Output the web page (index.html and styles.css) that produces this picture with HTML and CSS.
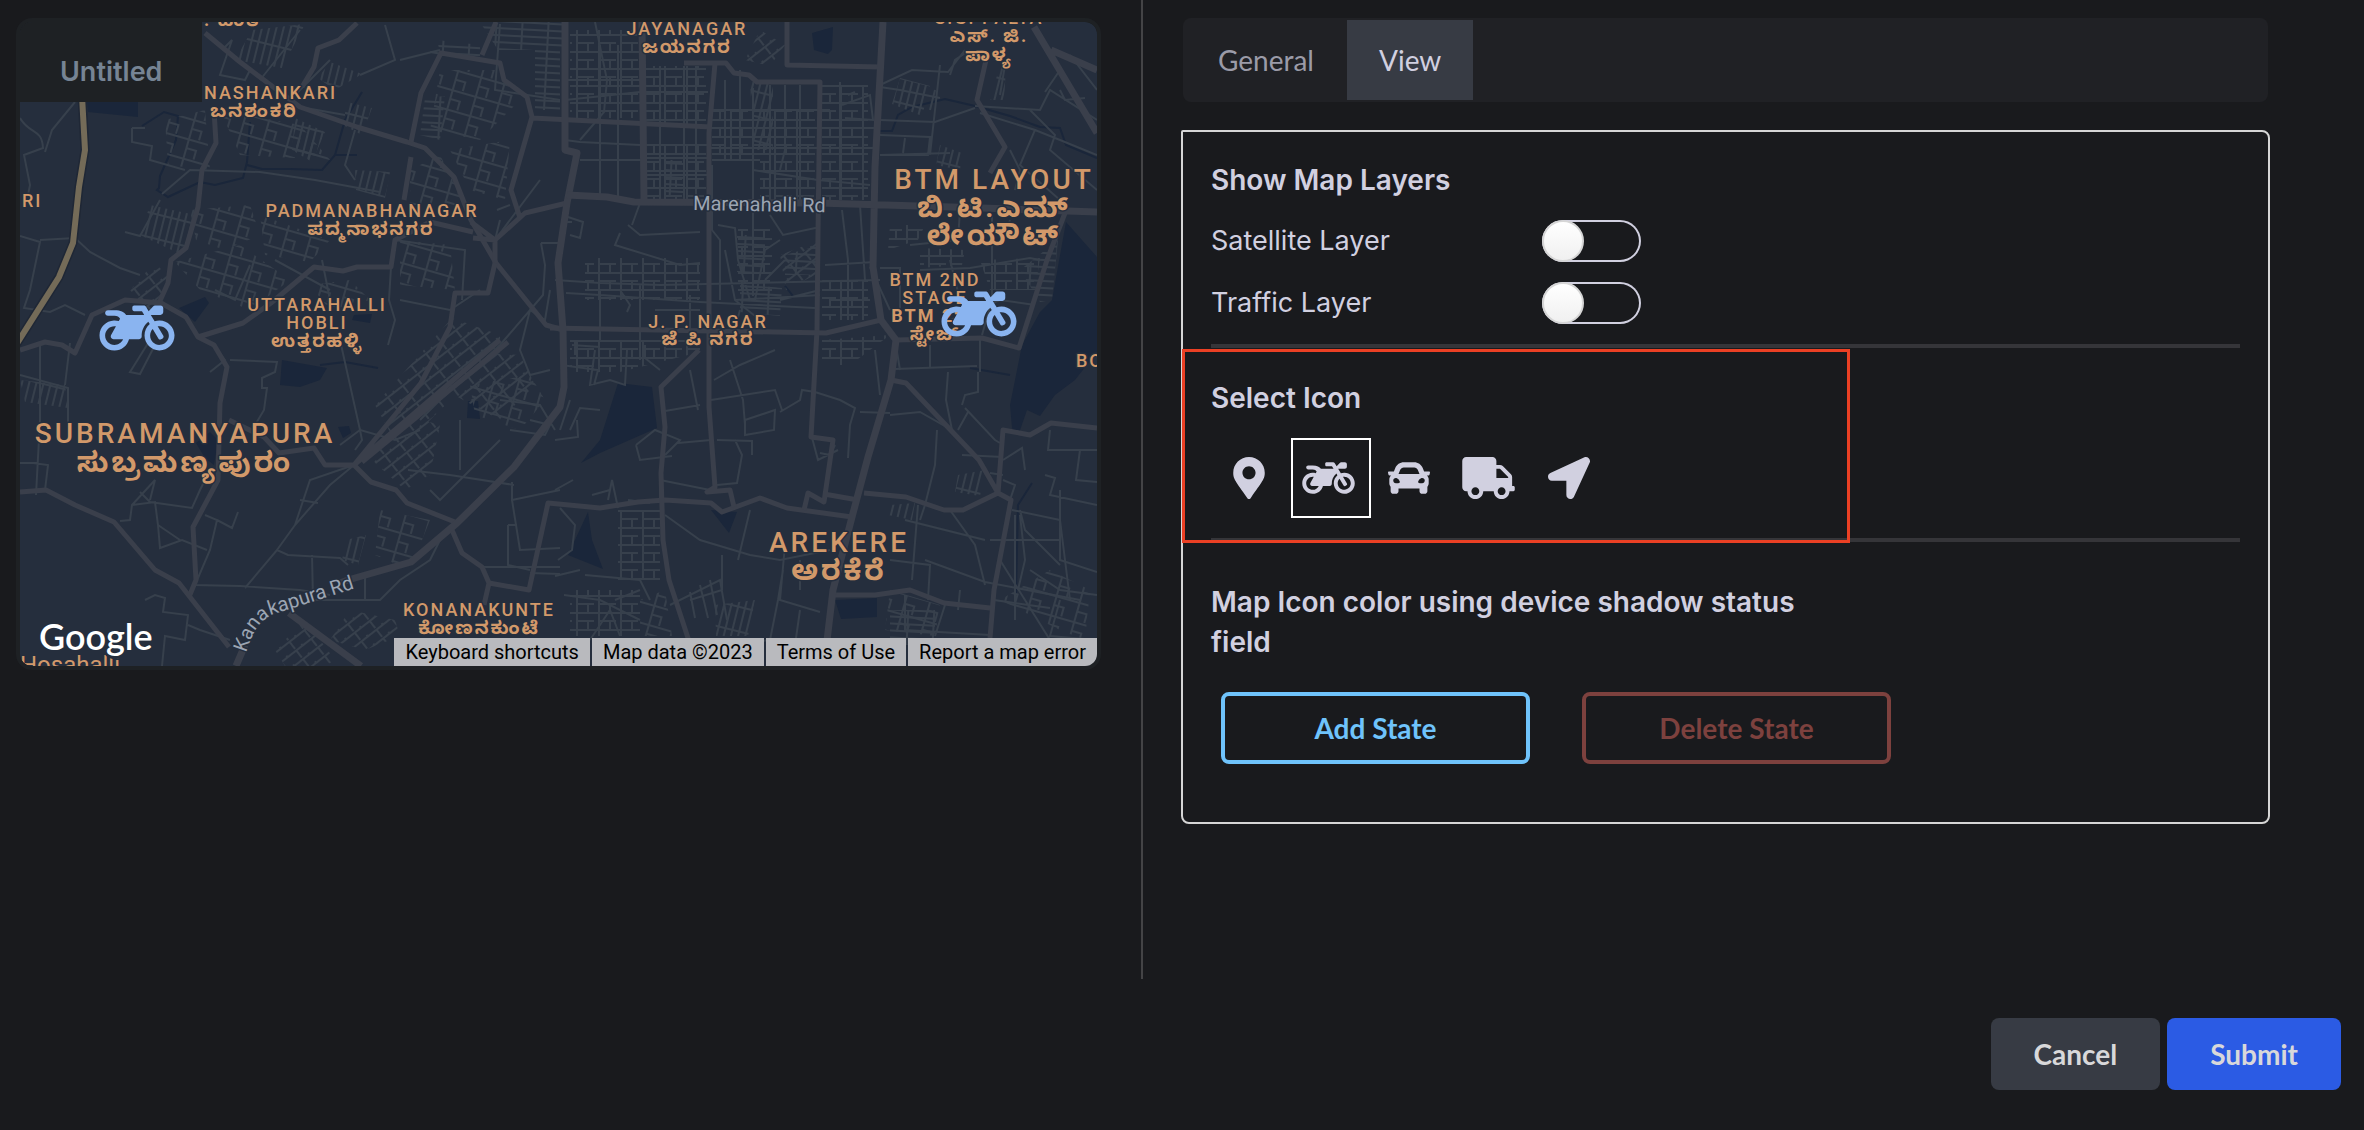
FILE: index.html
```html
<!DOCTYPE html>
<html lang="en">
<head>
<meta charset="utf-8">
<meta name="viewport" content="width=device-width, initial-scale=1">
<title>Map widget</title>
<link rel="stylesheet" href="styles.css">
</head>
<body>
<svg class="sprite" aria-hidden="true">
  <symbol id="i-pin" viewBox="0 0 384 512"><path d="M172.268 501.67C26.97 291.031 0 269.413 0 192 0 85.961 85.961 0 192 0s192 85.961 192 192c0 77.413-26.97 99.031-172.268 309.67-9.535 13.774-29.93 13.773-39.464 0zM192 272c44.183 0 80-35.817 80-80s-35.817-80-80-80-80 35.817-80 80 35.817 80 80 80z"/></symbol>
  <symbol id="i-moto" viewBox="0 0 640 512"><path d="M512.9 192c-14.9-.1-29.1 2.3-42.4 6.9L437.6 144H520c13.3 0 24-10.7 24-24V88c0-13.3-10.7-24-24-24h-45.3c-6.8 0-13.3 2.9-17.8 7.9l-37.5 41.7-22.8-38C392.2 68.4 384.4 64 376 64h-80c-8.8 0-16 7.2-16 16v16c0 8.8 7.2 16 16 16h66.4l19.2 32H227.9c-17.7-23.1-44.9-40-99.9-40H72.5C59 104 47.7 115 48 128.5c.2 13 10.9 23.5 24 23.5h56c24.5 0 38.7 10.9 47.8 24.8l-11.3 20.5c-13-3.9-26.9-5.7-41.3-5.2C55.9 194.5 1.6 249.6 0 317c-1.6 72.1 56.3 131 128 131 59.6 0 109.7-40.8 124-96h84.2c13.7 0 24.6-11.4 24-25.1-2.1-47.1 17.5-93.7 56.2-125l12.5 20.8c-27.6 23.7-45.1 58.9-44.8 98.2.5 69.6 57.2 126.5 126.8 127.1 71.6.7 129.8-57.5 129.2-129.1-.7-69.6-57.6-126.4-127.2-126.9zM128 400c-44.1 0-80-35.9-80-80s35.9-80 80-80c4.2 0 8.4.3 12.5 1L99 316.4c-8.8 16 2.8 35.6 21 35.6h81.3c-12.4 28.2-40.6 48-73.3 48zm463.9-75.6c-2.2 40.6-35 73.4-75.5 75.5-46.1 2.5-84.4-34.3-84.4-79.9 0-21.4 8.4-40.8 22.1-55.1l49.4 82.4c4.5 7.6 14.4 10 22 5.5l13.7-8.2c7.6-4.5 10-14.4 5.5-22l-48.6-80.9c5.2-1.1 10.5-1.6 15.9-1.6 45.6-.1 82.3 38.2 79.9 84.3z"/></symbol>
  <symbol id="i-car" viewBox="0 0 512 512"><path d="M499.99 176h-59.87l-16.64-41.6C406.38 91.63 365.57 64 319.5 64h-127c-46.06 0-86.88 27.63-103.99 70.4L71.87 176H12.01C4.2 176-1.53 183.34.37 190.91l6 24C7.7 220.25 12.5 224 18.01 224h20.07C24.65 235.73 16 252.78 16 272v48c0 16.12 6.16 30.67 16 41.93V416c0 17.67 14.33 32 32 32h32c17.67 0 32-14.33 32-32v-32h256v32c0 17.67 14.33 32 32 32h32c17.67 0 32-14.33 32-32v-54.07c9.84-11.25 16-25.8 16-41.93v-48c0-19.22-8.65-36.27-22.07-48H494c5.51 0 10.31-3.75 11.64-9.09l6-24c1.89-7.57-3.84-14.91-11.65-14.91zm-352.06-17.83c7.29-18.22 24.94-30.17 44.57-30.17h127c19.63 0 37.28 11.95 44.57 30.17L384 208H128l19.93-49.83zM96 319.8c-19.2 0-32-12.76-32-31.9S76.8 256 96 256s48 28.71 48 47.85-28.8 15.95-48 15.95zm320 0c-19.2 0-48 3.19-48-15.95S396.8 256 416 256s32 12.76 32 31.9-12.8 31.9-32 31.9z"/></symbol>
  <symbol id="i-truck" viewBox="0 0 640 512"><path d="M624 352h-16V243.9c0-12.7-5.1-24.9-14.1-33.9L494 110.1c-9-9-21.2-14.1-33.9-14.1H416V48c0-26.5-21.5-48-48-48H48C21.5 0 0 21.5 0 48v320c0 26.5 21.5 48 48 48h16c0 53 43 96 96 96s96-43 96-96h128c0 53 43 96 96 96s96-43 96-96h48c8.8 0 16-7.2 16-16v-32c0-8.8-7.2-16-16-16zM160 464c-26.5 0-48-21.5-48-48s21.5-48 48-48 48 21.5 48 48-21.5 48-48 48zm320 0c-26.5 0-48-21.5-48-48s21.5-48 48-48 48 21.5 48 48-21.5 48-48 48zm80-208H416V144h44.1l99.9 99.9V256z"/></symbol>
  <symbol id="i-arrow" viewBox="0 0 512 512"><path d="M444.52 3.52L28.74 195.42c-47.97 22.39-31.98 92.75 19.19 92.75h175.91v175.91c0 51.17 70.36 67.17 92.75 19.19l191.9-415.78c15.99-38.39-25.59-79.97-63.97-63.97z"/></symbol>
</svg>

<div class="page">
  <main class="panes">
    <section class="preview">
      <div class="map-card">
        <svg class="map" viewBox="20 22 1077 644" preserveAspectRatio="xMidYMid slice" role="img" aria-label="Map of south Bengaluru">
          <defs>
            <pattern id="g1" width="22" height="17" patternUnits="userSpaceOnUse"><path class="hatch" d="M0 1H22M5 0V17M16 8V17M5 9H22"/></pattern>
            <pattern id="g2" width="7" height="24" patternUnits="userSpaceOnUse" patternTransform="rotate(14)"><path class="hatch" d="M2 0V24M0 2H7"/></pattern>
            <pattern id="g3" width="26" height="7" patternUnits="userSpaceOnUse" patternTransform="rotate(3)"><path class="hatch" d="M0 2H26M3 0V7"/></pattern>
            <pattern id="g4" width="19" height="11" patternUnits="userSpaceOnUse" patternTransform="rotate(-38)"><path class="hatch" d="M0 2H19M4 2V11M12 0V2"/></pattern>
            <pattern id="g5" width="24" height="20" patternUnits="userSpaceOnUse" patternTransform="rotate(16)"><path class="hatch" d="M0 2H24M4 0V20M4 11H14V20"/></pattern>
          </defs>
          <rect class="land" x="20" y="22" width="1077" height="644"/>
          <g class="water">
            <path d="M87 102H138V117L88 112zM179 308L205 297 209 303 195 322zM354 315L372 314 370 323 352 320zM282 360L327 368 320 380 300 387 280 385zM468 401H478L480 419 467 418zM338 427L349 426 351 433 343 438zM196 443L210 432 218 440 214 465 205 458zM618 383L652 387 657 428 600 453 581 463 600 440zM588 512L592 540 603 569 568 555zM711 510L737 512 729 533zM835 600L877 598 877 617 841 619zM812 33L833 27 832 50 828 54 814 50zM1066 222L1097 257V352L1075 380 1055 395 1040 416 1027 410 1018 436 1012 428 1010 405 1022 345 1040 312 1052 300z"/>
            <path class="stream" d="M142 126L164 112 178 116 176 140 160 176 159 188 157 190 168 197 200 182 215 185 243 178 247 162 250 122M247 165L262 169 290 169 322 170 335 155H357M335 155L345 120 362 92M880 131H892L898 115 912 107 945 99 975 106 1010 116 1040 127 1060 128 1066 145 1097 158M970 368L1010 375M1032 483L1018 505 1016 594M785 286L793 296M320 365L345 362 378 368"/>
          </g>
          <g class="blocks">
            <path fill="url(#g2)" d="M252 30L305 24 282 68 235 60zM347 102L372 108 362 135 343 125zM295 118L325 132 312 162 292 150zM330 62L362 74 335 90 318 78zM355 170L390 172 385 198 356 190zM150 205L195 215 182 255 140 235zM900 78L930 86 922 116 892 104zM940 145L962 153 960 170 936 165zM750 82H773V150H754zM1000 65L1006 68 1004 100 990 100zM346 540L366 535 358 565 342 560zM20 380L65 385 68 408 25 402zM715 605L755 600 748 636 716 636zM890 505L915 503 912 520 888 515zM958 475L985 470 980 496 955 492z"/>
            <path fill="url(#g1)" d="M570 30H640V118H570zM646 66H706V124H646zM712 110H815V160H712zM822 85H868V200H822zM646 145H706V200H646zM585 258H700V300H585zM738 228H772V296H738zM822 280H868V320H822zM570 340H700V352L620 372H570zM822 340L890 335 850 365H822zM760 160H815V200H760zM890 225L925 225 918 240 888 250zM920 248L965 250 962 265 920 268zM618 510L660 510V580H618zM570 590L640 590V636H570zM980 260L1040 258 1035 290 990 290z"/>
            <path fill="url(#g3)" d="M437 40L480 45V60L440 52zM480 22H565V50H498zM664 160L683 160V196H664zM737 235H765V272H737zM740 284L782 288 780 316 740 312zM535 22H560V110H535zM425 98L445 96 440 140 420 135zM785 255L820 245V275H785zM890 610H935V645H890zM1020 270L1058 240 1052 300 1040 302z"/>
            <path fill="url(#g4)" d="M375 405L452 318 500 335 500 352 430 420 400 450zM430 350L520 355 535 385 500 420 445 390zM372 460L405 415 440 425 430 475 405 490zM130 290L155 262 170 280 150 312zM275 650L305 620 335 660 325 666H285zM330 640L350 610 395 620 400 636 365 650zM780 255L820 240 815 275 786 290zM760 30L785 45 770 66 745 60z"/>
            <path fill="url(#g5)" d="M165 120L205 110 210 170 168 165zM190 210L250 205 260 235 225 250 196 240zM175 262L240 245 290 280 250 310 200 290zM260 215L330 240 310 262 265 255zM310 285L350 280 370 300 330 310zM220 110L300 125 330 160 240 155zM440 70L495 70 520 100 480 140 430 130zM450 150L510 140 505 200 470 190zM410 170L440 155 465 205 410 205zM400 240L450 245 455 290 400 285zM470 385L530 375 545 400 520 430 475 415zM380 510L430 520 410 570 375 555zM640 600L665 590 672 636 640 636zM890 590L940 605 935 636 885 630zM1000 600L1050 570 1090 590 1085 640 1060 630z"/>
          </g>
          <g class="minor">
            <path d="M20 118C30 135 42 128 43 148L24 155 30 185 28 195M75 102L52 130 45 152M20 236L40 242 30 290 24 308 50 312 65 305 85 315M40 240L75 238 90 252 120 268 140 275M132 128L145 128M132 128V142L152 146 150 160 185 170M125 232L140 236 160 200M162 194L190 170 260 172 315 180 380 192M150 340L130 372 140 374 155 345M210 342L225 360 210 372M230 360L277 362 275 372 262 378V388H267L264 410 255 425M20 375L68 388 68 425M70 343L65 385M40 345V420L36 495M33 463L48 465 45 490M20 463H38M140 492L150 502 192 508 200 490 210 470M150 500L155 480 132 505 130 520 120 521M132 505L155 502 158 525 160 548 182 540 207 550M158 525L180 540M205 515L217 520 210 550 195 585 240 586 300 590 330 595M217 520L232 528 238 512M245 588L277 550 288 555 340 558 348 565M277 550L295 525 330 485 354 465M300 500L318 503M354 465L310 480 295 525M312 555L313 600 330 600 380 600 400 580 430 560 440 540M365 575V600M145 600L155 595 165 598 163 612 188 615 185 640 165 636 162 666M188 625L200 630 230 640M275 260L330 290M250 265L235 300 215 290M330 300L322 260M340 445L360 430 362 440 355 450"/>
            <path d="M391 267L389 300 395 320 388 345M395 240L465 250 462 300M480 290L450 310 400 300M550 290L545 320 530 310 520 350 530 375 550 370M541 243H560M541 243L545 265 543 295 500 345 440 400 420 420M500 220L495 240 540 180M497 210L510 205M355 130L345 165 355 180M300 107L345 115M222 50L232 40 220 75 245 80 250 70M260 80L300 30M290 100L330 60M385 25L395 60 360 75M430 52L480 60M400 60L440 50M500 24L495 90 560 100M340 340L360 430 395 440 420 430M408 470L450 475 514 485M460 420V470M512 482V500L560 490M512 500L520 550 560 548M508 525V565L530 570M508 525H517M480 567H560M530 573L560 574M500 400L540 405 555 430M530 420L550 425 545 435 510 430M570 400L560 430M430 490L440 500 500 440"/>
            <path d="M600 45V200M618 45V200M580 160H642M565 140L580 142 640 145M565 100L640 92M565 80H642M595 22L607 80 604 112 580 140M660 66V200M684 66V200M696 66V200M646 145H708M646 158H708M646 175H708M646 92H708M725 80V160M740 70V160M753 88V240M770 85V200M785 85V150L780 170M800 85V200M840 82V200M842 105L870 95 873 120 845 118M848 95L855 92M711 110H830M711 128H875M711 148H875M712 160H760M753 170L818 180 870 185M712 165V230L720 240V300M880 85L912 70 948 72 965 50M880 87L900 90 940 98M880 120L935 122 975 108M880 135L930 137 928 155 880 155M905 138L903 153M880 155L950 153M930 110L935 90M940 65L930 155M975 106L1040 110 1050 90 1097 120M980 113L1035 130 1020 165 1060 200M1035 130L1060 140 1097 155M1010 150L1020 170 1015 190M1030 110L1055 135 1050 150 1097 190M950 75L955 60 970 50M1005 65L1000 95M1060 70L1045 92M1070 55L1097 90M1060 90L1065 100 1085 98"/>
            <path d="M565 216L583 222 580 238 570 235M565 222H572M620 233L615 245 680 265 700 263M628 225L640 235 700 232M640 203L632 225M555 280L600 283 660 285 880 280M566 293L600 295 700 302 815 308M600 290V340M620 290L630 305 627 312M640 285V360M655 310H700M690 295V330M725 250L735 300 760 320M735 300L820 295M740 310L735 328M755 300L765 250 780 240M780 300L820 290M765 280L785 260M842 210L848 260V320M860 205L865 280M825 265L875 262M830 300H870M718 225L735 228 738 260 750 300M770 215L783 235 820 227M880 268H900V310M920 270L970 268 1030 258 1040 260M992 215L992 300 982 335M950 260L960 300M960 210L958 240 910 245M1010 220L1000 245M950 320L1000 300 1035 305M870 267L890 310M895 340L900 370M930 345V368"/>
            <path d="M561 365L598 370 594 385M575 340L575 355M595 350L590 385 610 380 625 385 627 350M572 345L600 347M645 345V358L660 370M570 430L580 408 600 410M555 440L578 437 577 420M636 445L655 430 680 440 665 455M636 445L640 460 672 456M678 443L711 440M717 440L752 441V455M735 440L742 455 737 483 717 485M714 380L740 365 775 350M711 400L775 390 782 410M745 420L775 410 774 430 745 435zM745 425L743 400 730 360M665 411L700 405M690 370L698 410M780 412L800 400 802 390 815 392 840 400 855 408 850 425 848 458M860 412L890 413M895 369L977 366M978 372V392L965 395 962 405M948 372L946 400 952 430 920 412 890 415M968 412L958 430M965 408L995 440 1000 443M880 395L875 350M937 430L935 465 925 505 920 520M810 430L818 460 838 450M820 453L830 455 835 445M980 340V372M962 455L1003 457M990 473L1003 475M1003 460L1022 448 1025 470M1003 480L1015 485 1010 500M1050 430L1048 450 1097 450M1080 450L1076 480 1097 482M1045 475L1055 478 1050 495 1097 505M1060 490V560L1097 572M1020 510L1025 530 1060 565M1012 510L1060 520M1015 515L1015 620M1020 515L1025 560 1018 590"/>
            <path d="M665 515L700 540 750 555 780 560 830 550M750 510L738 560M722 555L722 590 690 600M670 605L720 580 727 620M690 592L695 618M700 585L708 618M710 580L717 615M685 650L770 640 765 680M783 570L778 600 770 640M785 545L780 600 820 612M800 610L795 645 830 655M800 560V590M905 520L985 540M918 505L912 580M950 510L975 545 985 585M990 540L1060 540M905 595V630L990 635M925 560L985 582 1080 600M960 590L958 610M945 605L935 636M1000 560L1025 600 1050 640M1030 570L1060 590 1097 595M1060 600L1050 636 1097 640M1060 520L1070 600M994 600L1050 608M890 560L930 565 928 600M560 508L575 525 572 550 558 560M564 595L600 600 640 620M585 575L640 580 650 600M590 640L610 610 620 636M615 600L640 590M573 480L555 490M608 500L612 480 618 508M592 495L610 490M628 500L650 503M660 500V480L710 490M555 576L580 570"/>
          </g>
          <g class="major">
            <path d="M205 33L240 62 300 107 357 127 407 142 425 148 454 177 471 220 496 263 546 325 563 330"/>
            <path d="M357 23L339 40 318 48 314 67 302 87M411 142L421 93 441 53 500 63 504 80 527 97 532 117 511 190 520 218M482 55L496 22M532 118L711 127M473 238L495 240 525 213 567 203M471 222L495 240V263M411 157L404 200"/>
            <path d="M214 110L216 143 202 170 198 207 186 248 171 260 168 283 159 303M20 350L45 342 62 345 75 353 92 315 125 300 161 303 186 317 198 337 214 345 227 367 220 403 218 480 193 527 196 580 189 597M198 337L243 323 271 303 314 267 343 271 357 267 391 267 395 240 430 222 473 232"/>
            <path d="M495 263L488 293 455 293 450 327 421 383 354 465M500 340L354 465M508 342L362 462M229 420L264 437 279 453 314 448 325 465 354 465 371 482 396 490 407 503 455 522M20 492L46 490 75 505 114 522 155 570 179 583 229 647"/>
            <path d="M452 530L462 553 482 567 489 583 529 590 548 503 600 508 638 502 665 500 711 503 722 512 760 498 787 508 852 517M489 583L484 605"/>
            <path d="M684 63H726L734 73 749 75 757 82H820L818 233 817 330 811 437 833 440 824 502 808 493 804 510M715 63L709 133V407L715 487 707 492 730 490 734 507M824 494L858 500"/>
            <path d="M787 22V65L881 67M550 328L826 333 881 320M699 350L661 387 665 427 661 473 663 540 669 580 688 638 694 666M896 340L982 338 1019 348 1047 260 1065 213"/>
            <path d="M986 60L977 100 1005 147 990 173M891 380L906 383 979 460 998 493 1011 500 994 590 990 638M864 493L906 497 944 510H963L998 493 1003 430 1030 435 1051 423 1097 428M835 595H875L910 590 944 603 990 608"/>
          </g>
          <g class="major wide">
            <path d="M236 666L245 645M340 583L348 580 411 562 457 523 514 467 560 407 564 387 563 330 558 263 567 203 577 153 565 150V22"/>
            <path d="M289 613L361 666M642 22L644 200M567 195L607 197 634 202 818 203 952 207 1097 212M883 22L875 167 873 267 881 320 896 340 891 380 868 457 852 517 833 590 824 666M1034 27L1097 133M1051 50L1097 70"/>
          </g>
          <path class="highway-edge" d="M82 96L85 150 79 187 73 243 59 277 16 345"/>
          <path class="highway" d="M82 96L85 150 79 187 73 243 59 277 16 345"/>

          <path id="kanakapura" fill="none" d="M246 653C252 634 258 621 274 614L356 588"/>
          <g class="place">
            <text x="204" y="26" lang="kn">. ಹಂತಿ</text>
            <text x="204" y="99">NASHANKARI</text>
            <text x="22" y="207">RI</text>
            <text x="1076" y="367">BO</text>
            <text x="20" y="673" class="village">Hosahalli</text>
            <g class="mid">
              <text x="254" y="117" lang="kn">ಬನಶಂಕರಿ</text>
              <text x="372" y="217">PADMANABHANAGAR</text>
              <text x="371" y="235" lang="kn">ಪದ್ಮನಾಭನಗರ</text>
              <text x="317" y="311">UTTARAHALLI</text>
              <text x="317" y="329">HOBLI</text>
              <text x="317" y="347" lang="kn">ಉತ್ತರಹಳ್ಳಿ</text>
              <text x="687" y="35">JAYANAGAR</text>
              <text x="687" y="53" lang="kn">ಜಯನಗರ</text>
              <text x="989" y="24">S.G. PALYA</text>
              <text x="989" y="42" lang="kn">ಎಸ್. ಜಿ.</text>
              <text x="989" y="61" lang="kn">ಪಾಳ್ಯ</text>
              <text x="935" y="286">BTM 2ND</text>
              <text x="935" y="304">STAGE</text>
              <text x="935" y="322" class="strong">BTM 2ನೇ</text>
              <text x="935" y="340" lang="kn">ಸ್ಟೇಜ್</text>
              <text x="708" y="328">J. P. NAGAR</text>
              <text x="708" y="345" lang="kn">ಜೆ ಪಿ ನಗರ</text>
              <text x="479" y="616">KONANAKUNTE</text>
              <text x="479" y="634" lang="kn">ಕೋಣನಕುಂಟೆ</text>
            </g>
            <g class="big">
              <text x="185" y="443">SUBRAMANYAPURA</text>
              <text x="185" y="472" lang="kn">ಸುಬ್ರಮಣ್ಯಪುರಂ</text>
              <text x="994" y="189">BTM LAYOUT</text>
              <text x="994" y="217" lang="kn">ಬಿ.ಟಿ.ಎಮ್</text>
              <text x="994" y="245" lang="kn">ಲೇಯೌಟ್</text>
              <text x="839" y="552">AREKERE</text>
              <text x="839" y="580" lang="kn">ಅರಕೆರೆ</text>
            </g>
          </g>
          <g class="road-name">
            <text x="693" y="210" transform="rotate(1 693 210)">Marenahalli Rd</text>
            <text><textPath href="#kanakapura">Kanakapura Rd</textPath></text>
          </g>
          <g class="marker">
            <use href="#i-moto" x="99" y="298" width="76" height="60"/>
            <use href="#i-moto" x="941" y="284" width="76" height="60"/>
          </g>
          <text class="logo" x="39" y="650">Google</text>
        </svg>
        <h1 class="map-title">Untitled</h1>
        <div class="credits">
          <button type="button">Keyboard shortcuts</button>
          <span>Map data ©2023</span>
          <a href="#terms">Terms of Use</a>
          <a href="#report">Report a map error</a>
        </div>
      </div>
    </section>

    <section class="settings">
      <div class="tabs" role="tablist">
        <button type="button" role="tab" aria-selected="false">General</button>
        <button type="button" role="tab" aria-selected="true">View</button>
      </div>
      <div class="card">
        <h2>Show Map Layers</h2>
        <div class="layer">
          <label for="satellite">Satellite Layer</label>
          <input type="checkbox" role="switch" id="satellite">
        </div>
        <div class="layer">
          <label for="traffic">Traffic Layer</label>
          <input type="checkbox" role="switch" id="traffic">
        </div>
        <div class="icon-section">
          <h2>Select Icon</h2>
          <div class="icons">
            <button type="button" aria-label="Pin"><svg width="32" height="42"><use href="#i-pin"/></svg></button>
            <button type="button" aria-label="Motorcycle" aria-pressed="true"><svg width="53" height="42"><use href="#i-moto"/></svg></button>
            <button type="button" aria-label="Car"><svg width="42" height="42"><use href="#i-car"/></svg></button>
            <button type="button" aria-label="Truck"><svg width="53" height="42"><use href="#i-truck"/></svg></button>
            <button type="button" aria-label="Arrow"><svg width="42" height="42"><use href="#i-arrow"/></svg></button>
          </div>
          <div class="highlight"></div>
        </div>
        <h2 class="state-title">Map Icon color using device shadow status field</h2>
        <div class="state-actions">
          <button type="button" class="add">Add State</button>
          <button type="button" class="delete">Delete State</button>
        </div>
      </div>
    </section>
  </main>
  <footer class="actions">
    <button type="button" class="cancel">Cancel</button>
    <button type="submit" class="submit">Submit</button>
  </footer>
</div>
</body>
</html>
```
FILE: styles.css
```css
*, *::before { box-sizing: border-box; }

body {
  margin: 0;
  background: #191a1d;
  color: #d1d0e0;
  font-family: Inter, "Noto Sans Kannada", "Noto Sans", sans-serif;
  font-size: 27px;
  line-height: 40px;
}

button { font: inherit; color: inherit; border: 0; padding: 0; cursor: pointer; }
h1, h2 { margin: 0; font-weight: 600; }
h1 { font-size: 27px; }
h2 { font-size: 28px; }
.sprite { position: absolute; width: 0; height: 0; }

.page { display: flex; flex-direction: column; min-height: 100vh; }
.panes { flex: 1; display: grid; grid-template-columns: 1143fr 1221fr; }

/* Map preview */
.preview { padding: 18px 40px 18px 16px; border-right: 2px solid #444446; }
.map-card {
  position: relative;
  border: 4px solid #1e2124;
  border-radius: 16px;
  overflow: hidden;
  background: #1e2124;
}
.map { display: block; width: 100%; height: auto; aspect-ratio: 1077 / 644; border-radius: 12px; }
.map-title {
  position: absolute;
  top: 0;
  left: 0;
  padding: 30px 40px 10px;
  background: #1e2124;
  color: #768494;
}
.credits {
  position: absolute;
  right: 0;
  bottom: 0;
  display: flex;
  gap: 2px;
  color: #000;
  font: 20px/28px Roboto, sans-serif;
}
.credits > * { padding: 0 11px; background: #b9babe; color: #000; text-decoration: none; }

.land { fill: #252e3d; }
.water { fill: #1a263a; }
.stream { fill: none; stroke: #1a263a; stroke-width: 2; }
.hatch { fill: none; stroke: #37404c; stroke-width: 2; }
.minor { fill: none; stroke: #37404c; stroke-width: 2; }
.major { fill: none; stroke: #3a3f4b; stroke-width: 5; stroke-linejoin: round; }
.major.wide { stroke-width: 7; }
.highway-edge { fill: none; stroke: #1f2735; stroke-width: 9; }
.highway { fill: none; stroke: #746b58; stroke-width: 6; }

.place, .road-name { paint-order: stroke; stroke: #252e3d; stroke-width: 3px; stroke-linejoin: round; }
.place {
  fill: #d2996a;
  font: 500 18px Roboto, "Noto Sans Kannada", "Noto Sans", sans-serif;
  letter-spacing: 2px;
}
.mid, .big { text-anchor: middle; }
.big { font-size: 28px; letter-spacing: 3px; }
.strong, .place [lang="kn"] { font-weight: 700; }
.village { font-size: 24px; font-weight: 400; letter-spacing: 0; }
.road-name { fill: #9ca5b3; font: 20px Roboto, sans-serif; }
.marker { fill: #8ab4f0; }
.logo {
  fill: #fff;
  font: 600 36px Lato, sans-serif;
  paint-order: stroke;
  stroke: #252e3d;
  stroke-width: 6px;
}

/* Settings */
.settings { padding: 18px 94px 18px 38px; }
.tabs {
  display: flex;
  margin: 0 2px 28px;
  padding: 2px;
  border-radius: 8px;
  background: #202125;
  font-family: Lato, sans-serif;
  font-size: 28px;
}
.tabs button { height: 80px; padding: 0 33px; background: none; color: #9b9ba8; }
.tabs [aria-selected="true"] { padding: 0 32px; background: #373b44; color: #d1d0e0; }

.card {
  padding: 28px 28px 58px;
  border: 2px solid #d6d6d6;
  border-radius: 2px 8px 8px;
}
.layer { display: flex; align-items: center; margin-top: 20px; }
.layer label { width: 331px; }
.layer input {
  appearance: none;
  display: flex;
  width: 99px;
  height: 42px;
  margin: 0;
  border-radius: 21px;
  box-shadow: inset 0 0 0 2px #d1d0e0;
  cursor: pointer;
}
.layer input::before {
  content: "";
  width: 42px;
  height: 42px;
  border: 2px solid #d6d6d6;
  border-radius: 50%;
  background: linear-gradient(#fff, #f0f0f0);
}

.icon-section {
  position: relative;
  margin-top: 20px;
  padding: 30px 0 20px;
  border: solid #353539;
  border-width: 4px 0;
}
.icons { display: flex; margin-top: 20px; }
.icons button {
  display: flex;
  align-items: center;
  justify-content: center;
  width: 80px;
  height: 80px;
  padding-right: 5px;
  border: 2px solid transparent;
  background: none;
}
.icons [aria-pressed="true"] { border-color: #fff; }
.icons svg { fill: #d1d0e0; }
.highlight {
  position: absolute;
  top: 1px;
  left: -29px;
  width: 668px;
  bottom: -5px;
  border: 3px solid #eb4024;
  pointer-events: none;
}

.state-title { margin-top: 40px; max-width: 620px; }
.state-actions { display: flex; gap: 52px; margin: 30px 0 0 10px; }
.state-actions button {
  width: 309px;
  height: 72px;
  border: 4px solid;
  border-radius: 8px;
  background: none;
  font: 700 28px Lato, sans-serif;
}
.add { color: #6fc3fb; }
.delete { color: #7d413e; }

/* Footer */
.actions { display: flex; justify-content: flex-end; gap: 7px; padding: 39px 23px 40px; }
.actions button {
  height: 72px;
  padding: 0 43px;
  border-radius: 8px;
  color: #d8d8da;
  font: 700 28px Lato, sans-serif;
}
.cancel { background: #373b44; }
.submit { background: #2b5be4; }
```
